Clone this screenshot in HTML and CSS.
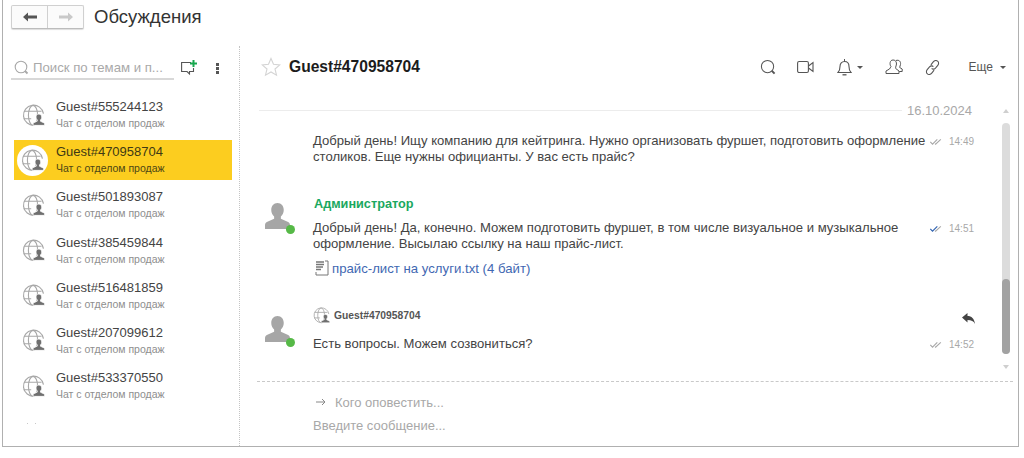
FILE: index.html
```html
<!DOCTYPE html>
<html lang="ru">
<head>
<meta charset="utf-8">
<title>Обсуждения</title>
<link rel="stylesheet" href="styles.css">
</head>
<body>
<svg class="defs" width="0" height="0" aria-hidden="true">
  <symbol id="guest" viewBox="0 0 24 24">
    <g fill="none" stroke="#a8a8a8" stroke-width="1.2">
      <path d="M13 22.2A10.5 10.5 0 1 1 22.4 10"/>
      <ellipse cx="11.5" cy="11.8" rx="4.8" ry="10.4"/>
      <path d="M2.4 7.6h18M1.6 15.4h8"/>
    </g>
    <path d="M17.6 10.5c2 0 3 1.400 3 3.200 0 1.300-.6 2.300-1.300 3v1.300l4.300 2v2.300H11.600V19.900l4.300-2v-1.300c-.7-.7-1.300-1.700-1.300-3 0-1.800 1-3.100 3-3.100z" fill="#6f6f6f" stroke="#fff" stroke-width=".8"/>
  </symbol>
  <symbol id="ticks" viewBox="0 0 15 8">
    <path d="M1 4.500l2.500 2.500L9 1.500" fill="none" stroke="currentColor" stroke-width="1.300"/>
    <path d="M6.500 6.500L7 7l6-5.500" fill="none" stroke="#a8a8a8" stroke-width="1.300"/>
  </symbol>
  <symbol id="person" viewBox="0 0 26 26" preserveAspectRatio="none">
    <path d="M13 0c4 0 6.500 3 6.500 7 0 3-1.300 5-3 6.500v2.300l7 3c1.500.7 2.500 1.600 2.500 3.500v3.700H0v-3.700c0-1.900 1-2.800 2.500-3.500l7-3v-2.300c-1.700-1.500-3-3.500-3-6.500C6.500 3 9 0 13 0z" fill="#a6a6a6"/>
  </symbol>
</svg>

<div class="window">
  <header class="topbar">
    <div class="nav">
      <button class="nav-btn" type="button" aria-label="Назад">
        <svg width="14" height="10" viewBox="0 0 14 10"><path d="M0 5l5-4.500V3.500h9v3H5v3z" fill="#555"/></svg>
      </button>
      <button class="nav-btn" type="button" aria-label="Вперед">
        <svg width="14" height="10" viewBox="0 0 14 10"><path d="M14 5L9 .5V3.500H0v3h9v3z" fill="#c9c9c9"/></svg>
      </button>
    </div>
    <h1 class="page-title">Обсуждения</h1>
  </header>

  <div class="columns">
    <aside class="sidebar">
      <div class="search-row">
        <div class="search">
          <svg class="search-icon" width="15" height="15" viewBox="0 0 15 15"><circle cx="7" cy="7" r="5.800" fill="none" stroke="#a8a8a8" stroke-width="1.100"/><path d="M11 11l2.500 2.500" stroke="#a8a8a8" stroke-width="1.800"/></svg>
          <span class="search-text">Поиск по темам и п...</span>
        </div>
        <svg class="new-chat" width="17" height="16" viewBox="0 0 17 16"><path d="M10 2.500H.6v9H6l2.500 2.500v-2.500h4V8" fill="none" stroke="#555" stroke-width="1.100"/><path d="M12.500 0v7M9 3.500h7" stroke="#18a84f" stroke-width="2"/></svg>
        <span class="more-dots"><i></i><i></i><i></i></span>
      </div>
      <ul class="chat-list">
        <li class="chat"><span class="chat-avatar"><svg width="23" height="23"><use href="#guest"/></svg></span><div class="chat-text"><div class="chat-name">Guest#555244123</div><div class="chat-sub">Чат с отделом продаж</div></div></li>
        <li class="chat active"><span class="chat-avatar"><svg width="23" height="23"><use href="#guest"/></svg></span><div class="chat-text"><div class="chat-name">Guest#470958704</div><div class="chat-sub">Чат с отделом продаж</div></div></li>
        <li class="chat"><span class="chat-avatar"><svg width="23" height="23"><use href="#guest"/></svg></span><div class="chat-text"><div class="chat-name">Guest#501893087</div><div class="chat-sub">Чат с отделом продаж</div></div></li>
        <li class="chat"><span class="chat-avatar"><svg width="23" height="23"><use href="#guest"/></svg></span><div class="chat-text"><div class="chat-name">Guest#385459844</div><div class="chat-sub">Чат с отделом продаж</div></div></li>
        <li class="chat"><span class="chat-avatar"><svg width="23" height="23"><use href="#guest"/></svg></span><div class="chat-text"><div class="chat-name">Guest#516481859</div><div class="chat-sub">Чат с отделом продаж</div></div></li>
        <li class="chat"><span class="chat-avatar"><svg width="23" height="23"><use href="#guest"/></svg></span><div class="chat-text"><div class="chat-name">Guest#207099612</div><div class="chat-sub">Чат с отделом продаж</div></div></li>
        <li class="chat"><span class="chat-avatar"><svg width="23" height="23"><use href="#guest"/></svg></span><div class="chat-text"><div class="chat-name">Guest#533370550</div><div class="chat-sub">Чат с отделом продаж</div></div></li>
      </ul>
      <div class="list-rest"><i></i><i></i></div>
    </aside>

    <main class="conversation">
      <div class="conv-head">
        <svg class="star" width="20" height="20" viewBox="0 0 20 20"><path d="M10 1.500l2.500 5.800 6.300.6-4.800 4.100 1.500 6.200L10 15l-5.500 3.200L6 12 1.200 7.900l6.300-.6z" fill="none" stroke="#d4d4d4" stroke-width="1.100"/></svg>
        <h2 class="conv-title">Guest#470958704</h2>
        <div class="tools">
          <svg width="16" height="16" viewBox="0 0 17 17"><circle cx="8" cy="8" r="6.500" fill="none" stroke="#555" stroke-width="1.100"/><path d="M12.500 12.500l3 3" stroke="#555" stroke-width="2"/></svg>
          <svg class="tool-video" width="17" height="14" viewBox="0 0 17 14"><rect x=".6" y="1.500" width="10.800" height="11" rx="1.500" fill="none" stroke="#555" stroke-width="1.100"/><path d="M11.500 6l4.500-3.500v9L11.500 8" fill="none" stroke="#555" stroke-width="1.100"/></svg>
          <span class="tool-bell">
            <svg width="15" height="17" viewBox="0 0 15 17"><path d="M1 13.500c1.500-1.500 2-3 2-6 0-3 1.800-5 4.500-5s4.500 2 4.500 5c0 3 .5 4.500 2 6z" fill="none" stroke="#555" stroke-width="1.100"/><path d="M5.500 15.800h4" stroke="#555" stroke-width="1.300"/><path d="M7.500 0v2.500" stroke="#555"/></svg>
            <i class="caret"></i>
          </span>
          <svg class="tool-people" width="18" height="16" viewBox="0 0 18 16"><path d="M6 7.500C4.500 6 4.500 1 8 1s4 3.500 3 6c-.3.8-.5 1.500-.3 2.500L14 12v2.500H1V12l3.500-2c.6-.6.800-1.500 1.500-2.500zM11 1.500c3-1 5 1 4.500 4-.2 1.200-.8 2-.8 3l2.500 1.500v2.500h-3" fill="none" stroke="#555" stroke-width="1"/></svg>
          <svg class="tool-link" width="17" height="17" viewBox="0 0 16 16"><g fill="none" stroke="#555" stroke-width="1"><path d="M6.500 5.500l2-2.500c1.500-1.800 3.200-2 4.300-1 1.300 1 1.200 2.800 0 4.200l-2 2.300c-1.200 1.300-2.700 1.300-3.600.3"/><path d="M9.500 10.500l-2 2.500c-1.500 1.800-3.200 2-4.300 1-1.300-1-1.200-2.800 0-4.200l2-2.300c1.200-1.300 2.700-1.300 3.600-.3"/></g></svg>
          <span class="tool-more">Еще<i class="caret caret-more"></i></span>
        </div>
      </div>

      <div class="feed-wrap">
        <div class="feed">
          <div class="date-row"><span class="date-line"></span><span class="date">16.10.2024</span></div>

          <article class="msg msg-first">
            <div class="msg-side"></div>
            <div class="msg-body">
              <div class="msg-line">
                <p class="msg-text">Добрый день! Ищу компанию для кейтринга. Нужно организовать фуршет, подготовить оформление столиков. Еще нужны официанты. У вас есть прайс?</p>
                <div class="msg-meta"><svg width="14" height="7" class="tick-grey"><use href="#ticks"/></svg><time>14:49</time></div>
              </div>
            </div>
          </article>

          <article class="msg msg-admin">
            <div class="msg-side"><span class="person"><svg width="25" height="26"><use href="#person"/></svg><i class="online"></i></span></div>
            <div class="msg-body">
              <div class="admin-name">Администратор</div>
              <div class="msg-line">
                <p class="msg-text">Добрый день! Да, конечно. Можем подготовить фуршет, в том числе визуальное и музыкальное оформление. Высылаю ссылку на наш прайс-лист.</p>
                <div class="msg-meta"><svg width="14" height="7" class="tick-blue"><use href="#ticks"/></svg><time>14:51</time></div>
              </div>
              <div class="attachment">
                <svg width="14" height="16" viewBox="0 0 14 16"><path d="M1 12v3h12V1H10" fill="none" stroke="#777"/><path d="M1 2h8M1 4.500h8M1 7h7M1 9.500h5" stroke="#777" stroke-width="1.300"/></svg>
                <a class="file-link" href="#">прайс-лист на услуги.txt (4 байт)</a>
              </div>
            </div>
          </article>

          <article class="msg msg-guest">
            <div class="msg-side"><span class="person"><svg width="25" height="26"><use href="#person"/></svg><i class="online"></i></span></div>
            <div class="msg-body">
              <div class="guest-head">
                <svg width="17" height="17"><use href="#guest"/></svg>
                <span class="guest-name">Guest#470958704</span>
                <svg class="reply" width="13" height="11" viewBox="0 0 13 11"><path d="M0 4.500L5.500 0v3c4 0 6.800 2.500 7.500 8-1.500-3-3.500-4-7.500-4v2.500z" fill="#444"/></svg>
              </div>
              <div class="msg-line">
                <p class="msg-text">Есть вопросы. Можем созвониться?</p>
                <div class="msg-meta"><svg width="14" height="7" class="tick-grey"><use href="#ticks"/></svg><time>14:52</time></div>
              </div>
            </div>
          </article>
        </div>
        <div class="scrollbar">
          <i class="arrow-up"></i>
          <div class="track"><div class="thumb"></div></div>
          <i class="arrow-down"></i>
        </div>
      </div>

      <div class="composer">
        <div class="notify"><svg width="10" height="8" viewBox="0 0 10 8"><path d="M0 4h9M6 1l3 3-3 3" fill="none" stroke="#888"/></svg><span>Кого оповестить...</span></div>
        <div class="input-hint">Введите сообщение...</div>
      </div>
    </main>
  </div>
</div>
</body>
</html>
```

FILE: styles.css
```css
* { box-sizing: border-box; }
html, body { margin: 0; padding: 0; background: #fff; }
body { font-family: "Liberation Sans", Arial, sans-serif; color: #333; overflow: hidden; }
.defs { position: absolute; }

.window {
  width: 1017px;
  height: 447px;
  margin-left: 2px;
  border: 1px solid #b0b0b0;
  border-top: 0;
  display: flex;
  flex-direction: column;
}

.topbar { height: 46px; display: flex; align-items: flex-start; padding: 5px 0 0 8px; flex: none; }
.nav {
  display: flex;
  width: 73px;
  height: 24px;
  border: 1px solid #d0d0d0;
  border-bottom-color: #bcbcbc;
  border-radius: 2px;
  background: #fbfbfb;
  box-shadow: 0 1px 1px #ddd;
}
.nav-btn {
  flex: 1;
  border: 0;
  background: none;
  padding: 0;
  display: flex;
  align-items: center;
  justify-content: center;
}
.nav-btn + .nav-btn { border-left: 1px solid #d0d0d0; }
.page-title { margin: 1px 0 0 10px; font-size: 18.500px; font-weight: 400; line-height: 22px; color: #333; }

.columns { flex: 1; display: flex; min-height: 0; }

.sidebar { width: 237px; flex: none; border-right: 1px dotted #c4c4c4; padding: 0 7px 0 8px; display: flex; flex-direction: column; }
.search-row { display: flex; align-items: center; height: 34px; margin-bottom: 15px; }
.search { width: 163px; height: 34px; flex: none; border-bottom: 2px solid #d8d8d8; display: flex; align-items: center; padding: 11px 0 0 3px; overflow: hidden; }
.search-icon { flex: none; }
.search-text { margin-left: 4px; font-size: 13.200px; color: #a9a9a9; white-space: nowrap; }
.new-chat { margin: 9px 0 0 7px; flex: none; }
.more-dots { margin: 10px 0 0 18px; display: flex; flex-direction: column; gap: 1px; }
.more-dots i { width: 3px; height: 3px; background: #555; display: block; }

.chat-list { list-style: none; margin: 0 0 0 3px; padding: 0; }
.chat { height: 40px; margin-bottom: 5.200px; display: flex; align-items: center; padding-left: 8px; }
.chat.active { background: #fccd1f; }
.chat-avatar { width: 23px; height: 23px; flex: none; display: flex; align-items: center; justify-content: center; }
.chat.active .chat-avatar { background: #fff; border-radius: 50%; width: 31px; height: 31px; margin-left: -5px; margin-right: -3px; }
.chat-text { margin-left: 11px; overflow: hidden; }
.chat-name { font-size: 13px; line-height: 17px; color: #444; white-space: nowrap; }
.chat-sub { font-size: 10.500px; line-height: 17px; color: #8e8e8e; white-space: nowrap; }
.chat.active .chat-name { color: #3e3a14; }
.chat.active .chat-sub { color: #4d4615; }
.list-rest { display: flex; gap: 7px; padding: 12px 0 0 16px; }
.list-rest i { width: 1px; height: 1px; background: #c8c8c8; }

.conversation { flex: 1; min-width: 0; display: flex; flex-direction: column; }
.conv-head { height: 55px; flex: none; display: flex; align-items: center; padding: 0 12px 13px 21px; }
.star { flex: none; }
.conv-title { margin: 0 0 0 8px; font-size: 15.600px; font-weight: 700; color: #1c1c1c; line-height: 18px; }
.tools { margin-left: auto; display: flex; align-items: center; color: #555; }
.tool-video { margin-left: 21px; }
.tool-bell { margin-left: 23px; display: flex; align-items: center; }
.caret { display: inline-block; width: 0; height: 0; border-left: 3px solid transparent; border-right: 3px solid transparent; border-top: 3px solid #555; margin-left: 5px; }
.caret-more { margin-left: 7px; }
.tool-people { margin-left: 22px; }
.tool-link { margin-left: 21px; }
.tool-more { margin-left: 28px; font-size: 12px; color: #555; display: flex; align-items: center; }

.feed-wrap { flex: 1; min-height: 0; display: flex; padding-right: 8px; }
.feed { flex: 1; min-width: 0; padding-left: 19px; }
.date-row { display: flex; align-items: center; height: 18px; padding-right: 29px; }
.date-line { flex: 1; border-top: 1px solid #ececec; }
.date { font-size: 13px; color: #a8a8a8; margin-left: 5px; }

.msg { display: flex; }
.msg-side { width: 54px; flex: none; }
.msg-body { flex: 1; min-width: 0; padding-right: 25px; }
.msg-line { display: flex; align-items: flex-start; }
.msg-text { margin: 0; flex: 1; min-width: 0; font-size: 13.100px; line-height: 16px; color: #444; }
.msg-meta { width: 48px; flex: none; display: flex; align-items: center; font-size: 10px; color: #a8a8a8; height: 16px; padding-left: 1px; }
.msg-meta time { margin-left: 6px; }
.tick-grey { color: #a8a8a8; }
.tick-blue { color: #2f62b0; }

.msg-first { margin-top: 14px; }
.msg-admin { margin-top: 31px; }
.admin-name { font-size: 12.700px; line-height: 16px; font-weight: 700; color: #1aa860; margin-bottom: 8px; padding-left: 1px; }
.msg-admin .msg-side { padding-top: 7px; }
.person { position: relative; display: block; width: 25px; height: 26px; margin-left: 6px; }
.online { position: absolute; right: -5px; bottom: -5px; width: 9px; height: 9px; border-radius: 50%; background: #56b947; }
.attachment { display: flex; align-items: center; height: 16px; margin-top: 8px; margin-left: 2px; }
.file-link { margin-left: 3px; font-size: 13.200px; color: #3f68b2; text-decoration: none; }

.msg-guest { margin-top: 31px; }
.msg-guest .msg-side { padding-top: 9px; }
.guest-head { display: flex; align-items: center; height: 17px; margin-bottom: 12px; }
.guest-name { margin-left: 4px; font-size: 10.300px; font-weight: 700; color: #555; }
.reply { margin-left: auto; margin-right: 1px; margin-top: 5px; }

.scrollbar { width: 8px; flex: none; display: flex; flex-direction: column; align-items: center; margin-left: 1px; }
.arrow-up, .arrow-down { width: 0; height: 0; border-left: 3px solid transparent; border-right: 3px solid transparent; flex: none; }
.arrow-up { border-bottom: 4px solid #cfcfcf; margin-top: 8px; }
.arrow-down { border-top: 4px solid #cfcfcf; margin: 11px 0 0; }
.track { width: 8px; height: 231px; flex: none; margin-top: 10px; background: #dcdcdc; border-radius: 4px; display: flex; flex-direction: column; justify-content: flex-end; }
.thumb { width: 8px; height: 75px; background: #a2a2a2; border-radius: 4px; }

.composer { flex: none; height: 65px; margin-left: 17px; margin-right: 5px; border-top: 1px dashed #c9c9c9; padding-top: 12px; }
.notify { display: flex; align-items: center; height: 16px; padding-left: 59px; font-size: 13px; color: #a8a8a8; }
.notify span { margin-left: 9px; }
.input-hint { margin: 8px 0 0 56px; font-size: 13px; line-height: 16px; color: #a8a8a8; }
```
